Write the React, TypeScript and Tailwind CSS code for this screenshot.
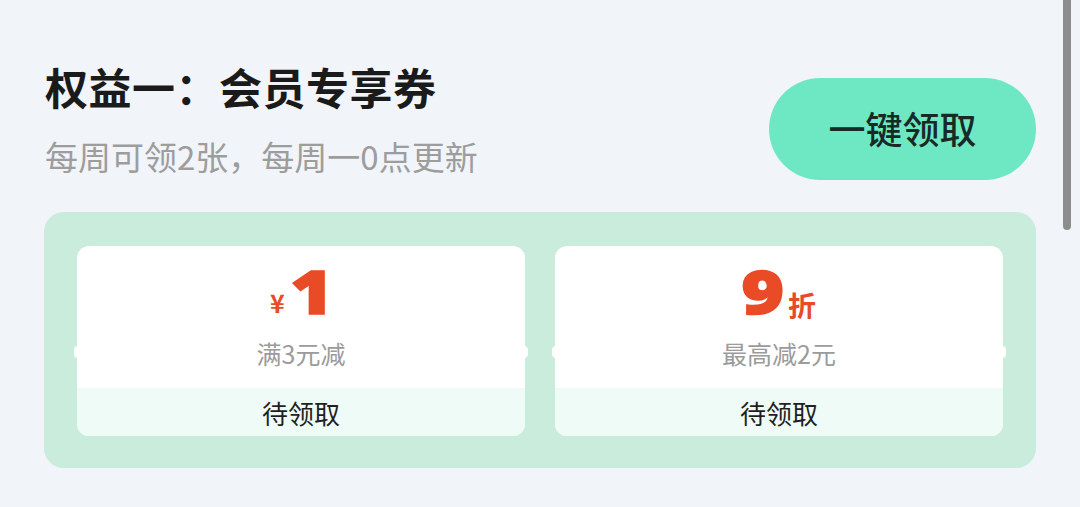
import React from 'react';

interface Coupon {
    prefix?: string;
    value: string;
    suffix?: string;
    desc: string;
    status: string;
}

const coupons: Coupon[] = [
    { prefix: '¥', value: '1', desc: '满3元减', status: '待领取' },
    { value: '9', suffix: '折', desc: '最高减2元', status: '待领取' },
];

const CouponCard: React.FC<{ coupon: Coupon }> = ({ coupon }) => (
    <div className="relative flex-1 h-[190px] bg-white rounded-[12px] flex flex-col">
        {/* side notches */}
        <span className="absolute left-[-3px] top-[100px] w-[8px] h-[12px] rounded-full bg-white" />
        <span className="absolute right-[-3px] top-[100px] w-[8px] h-[12px] rounded-full bg-white" />

        <div className="h-[142px] flex flex-col items-center">
            <div className="h-[60px] mt-[15px] flex items-end text-[#e94b26]">
                {coupon.prefix && (
                    <span className="text-[25px] leading-none font-bold mb-[6px] mr-[6px]">{coupon.prefix}</span>
                )}
                <span className="inline-block mx-[3px] scale-x-[1.22] text-[60px] leading-none font-black font-['Noto_Sans',sans-serif] [-webkit-text-stroke:1.5px_#e94b26]">
                    {coupon.value}
                </span>
                {coupon.suffix && (
                    <span className="text-[28px] leading-none font-bold mb-[2px] ml-[5px]">{coupon.suffix}</span>
                )}
            </div>
            <div className="mt-[16px] text-[25px] leading-[32px] text-[#9b9b9b]">{coupon.desc}</div>
        </div>
        <div className="flex-1 bg-[#eefbf6] rounded-b-[12px] flex items-center justify-center text-[26px] text-[#1f1f1f]">
            {coupon.status}
        </div>
    </div>
);

export default function App() {
    return (
        <div className="relative w-[1080px] h-[507px] overflow-hidden bg-[#f1f4f8] font-['Noto_Sans_CJK_SC','Noto_Sans',sans-serif]">
            {/* Header */}
            <div className="flex justify-between pl-[45px] pr-[44px] pt-[62px]">
                <div>
                    <h2 className="text-[43px] leading-[48px] font-bold text-[#1a1a1a] tracking-[0.5px]">权益一：会员专享券</h2>
                    <p className="mt-[26px] text-[33px] leading-[40px] text-[#9d9d9d]">每周可领2张，每周一0点更新</p>
                </div>
                <button className="mt-[16px] w-[267px] h-[102px] rounded-full bg-[#6ee8c3] text-[37px] font-medium text-[#172a23]">
                    一键领取
                </button>
            </div>

            {/* Coupons */}
            <div className="mx-[44px] mt-[32px] bg-[#c9ecdd] rounded-[20px] px-[33px] pt-[34px] pb-[32px] flex gap-[30px]">
                {coupons.map((c, i) => (
                    <CouponCard key={i} coupon={c} />
                ))}
            </div>

            {/* scrollbar */}
            <div className="absolute right-[9px] top-[-10px] w-[8px] h-[240px] rounded-full bg-[#8c8c8c]" />
        </div>
    );
}
